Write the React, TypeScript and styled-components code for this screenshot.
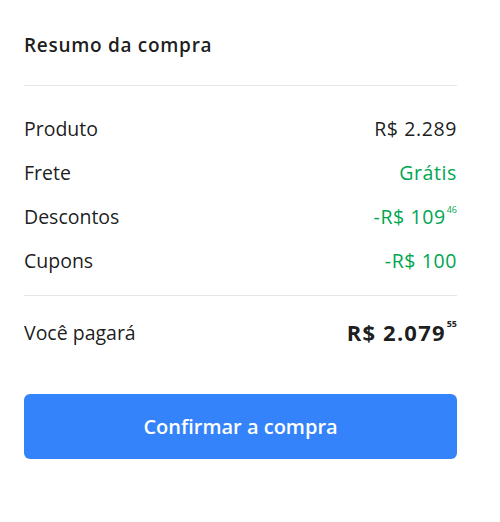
import React from 'react'
import styled, { createGlobalStyle } from 'styled-components'

const GlobalStyle = createGlobalStyle`
  body {
    margin: 0;
    background: #fff;
    font-family: 'Open Sans', 'Liberation Sans', sans-serif;
    color: rgba(0, 0, 0, 0.9);
  }
`

const Summary = styled.section`
  width: 433px;
  margin-left: 24px;
  padding-top: 32px;
`

const Title = styled.h2`
  margin: 0;
  font-size: 19px;
  line-height: 26px;
  font-weight: 600;
  letter-spacing: 0.7px;
`

const Divider = styled.hr`
  margin: 0;
  border: none;
  height: 1px;
  background: #e6e6e6;
`

const TopDivider = styled(Divider)`
  margin-top: 27px;
`

const Rows = styled.div`
  display: flex;
  flex-direction: column;
  gap: 20px;
  padding: 30px 0 23px;
`

const Row = styled.div`
  display: flex;
  justify-content: space-between;
  align-items: center;
  height: 24px;
  font-size: 19.5px;
`

const Value = styled.span<{ green?: boolean }>`
  letter-spacing: 0.6px;
  color: ${p => (p.green ? '#00a650' : 'rgba(0, 0, 0, 0.9)')};
`

const Cents = styled.sup`
  font-size: 9px;
  vertical-align: top;
  line-height: 1;
  letter-spacing: 0;
  margin-left: 1px;
  position: relative;
  top: 2px;
`

const TotalRow = styled(Row)`
  height: 28px;
  margin-top: 22px;
`

const TotalValue = styled.span`
  font-size: 22px;
  font-weight: 700;
  letter-spacing: 1.2px;
`

const ConfirmButton = styled.button`
  display: block;
  width: 100%;
  height: 65px;
  margin-top: 48px;
  border: none;
  border-radius: 6px;
  background: #3483fa;
  color: #fff;
  font-family: inherit;
  font-size: 20px;
  font-weight: 600;
  cursor: pointer;
`

const App = () => {
  return (
    <>
      <GlobalStyle />
      <Summary>
        <Title>Resumo da compra</Title>
        <TopDivider />
        <Rows>
          <Row>
            <span>Produto</span>
            <Value>R$ 2.289</Value>
          </Row>
          <Row>
            <span>Frete</span>
            <Value green>Grátis</Value>
          </Row>
          <Row>
            <span>Descontos</span>
            <Value green>
              -R$ 109<Cents>46</Cents>
            </Value>
          </Row>
          <Row>
            <span>Cupons</span>
            <Value green>-R$ 100</Value>
          </Row>
        </Rows>
        <Divider />
        <TotalRow>
          <span>Você pagará</span>
          <TotalValue>
            R$ 2.079<Cents>55</Cents>
          </TotalValue>
        </TotalRow>
        <ConfirmButton>Confirmar a compra</ConfirmButton>
      </Summary>
    </>
  )
}

export default App
